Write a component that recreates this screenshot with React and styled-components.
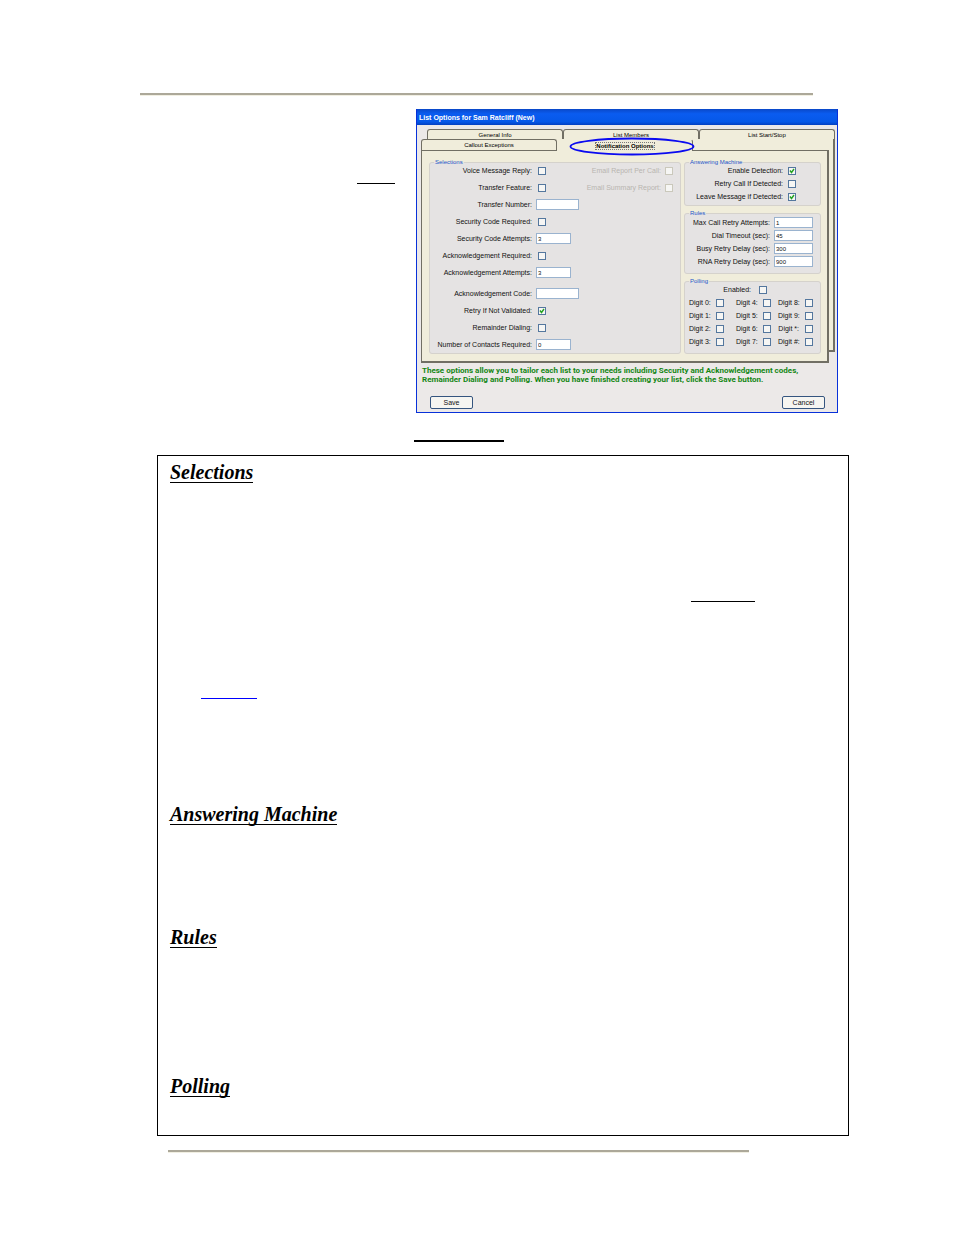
import React from "react";
import styled, { createGlobalStyle } from "styled-components";

const GlobalStyle = createGlobalStyle`
  * {
    box-sizing: border-box;
  }

  body {
    margin: 0;
    background: #fff;
    color: #000;
    font-family: "Liberation Sans", Arial, sans-serif;
  }
`;

const Page = styled.main`
  padding: 93px 105px 80px 140px;
`;

const Rule = styled.hr`
  height: 3px;
  margin: ${(p) => (p.$footer ? "14px 100px 0 28px" : "0 36px 0 0")};
  border: none;
  border-top: 2px solid #aca899;
  background: #f1efe2;
`;

const Intro = styled.section`
  display: flex;
  justify-content: space-between;
  margin-top: 13px;
  padding-right: 11px;
`;

const IntroText = styled.div`
  flex: 1;
  padding: 74px 21px 0 0;
`;

const BlankLink = styled.a`
  display: block;
  width: ${(p) => p.$width}px;
  height: ${(p) => p.$thick || 1}px;
  margin: ${(p) => p.$margin || "0"};
  background: ${(p) => p.$color || "#000"};
`;

const FigureLine = styled.div`
  padding: 27px 0 13px 274px;
`;

/* Dialog window */

const Dialog = styled.form`
  width: 422px;
  border: 1px solid #0831d9;
  border-width: 0 1px 1px 1px;
  background: #ece9e8;
  font-size: 7px;
  line-height: 10px;
`;

const TitleBar = styled.h2`
  height: 16px;
  margin: 0;
  padding: 0 2px;
  background: linear-gradient(#0a48c8, #0a5cf0 30%, #0558e8 80%, #0340c0);
  color: #fff;
  font-size: 7px;
  line-height: 17px;
  font-weight: bold;
`;

const DialogBody = styled.div`
  padding: 4px 2px 3px 4px;
`;

const Sheets = styled.div`
  display: grid;
`;

const Sheet = styled.div`
  grid-area: 1 / 1;
  display: flex;
  flex-direction: column;
  margin: ${(p) => (p.$back ? "0 0 11px 6px" : "10px 6px 0 0")};
`;

const TabRow = styled.div`
  display: flex;
  height: ${(p) => (p.$back ? 10 : 11)}px;
`;

const Tab = styled.button`
  flex: 0 0 calc(100% / 3);
  height: 100%;
  padding: 0;
  border: 1px solid #716f64;
  border-bottom: none;
  border-radius: 3px 3px 0 0;
  background: #f0eddb;
  color: #000;
  font-family: inherit;
  font-size: 6px;
  line-height: 10px;
`;

const ActiveTab = styled(Tab)`
  position: relative;
  height: 12px;
  border-color: transparent #716f64 transparent transparent;
  font-weight: bold;
`;

const FocusText = styled.span`
  outline: 1px dotted #777;
`;

/* Ring lies over the active tab */
const Ring = styled.svg`
  position: absolute;
  top: -2px;
  left: 12px;
  overflow: visible;
`;

const SheetBody = styled.div`
  flex: 1;
  display: flex;
  gap: 3px;
  padding: 7px 6px 7px 7px;
  border: solid #716f64;
  border-width: ${(p) => (p.$back ? "0 2px 2px 1px" : "1px 2px 2px 1px")};
  background: #f0eddb;
`;

const SideGroups = styled.div`
  flex: 0 0 137px;
  display: flex;
  flex-direction: column;
  gap: 3px;
`;

const Group = styled.fieldset`
  flex: ${(p) => p.$flex || "none"};
  min-width: 0;
  margin: 0;
  padding: 0 4px ${(p) => p.$bottom || 0}px;
  border: 1px solid #d5d2cc;
  border-radius: 3px;
  background: #e5e3e3;

  legend {
    margin-bottom: ${(p) => p.$pull || -2}px;
    padding: 0 1px;
    color: #1f55c8;
    font-size: 6px;
    line-height: 8px;
  }
`;

const Columns = styled.div`
  display: flex;
`;

const Field = styled.label`
  display: grid;
  grid-template-columns: ${(p) => p.$label}px 1fr;
  column-gap: 4px;
  align-items: center;
  height: ${(p) => p.$height || 17}px;
  margin-top: ${(p) => p.$gap || 0}px;
  color: ${(p) => (p.$disabled ? "#b8b5b0" : "#111")};
  white-space: nowrap;

  & > span {
    text-align: right;
  }
`;

const Check = styled.input`
  appearance: none;
  width: 8px;
  height: 8px;
  margin: 0 0 0 ${(p) => p.$indent || 0}px;
  border: 1px solid #54779e;
  background: #f6f6f4;

  &:checked {
    background: #f6f6f4
      url("data:image/svg+xml,%3Csvg xmlns='http://www.w3.org/2000/svg' viewBox='0 0 6 6'%3E%3Cpath d='M1 2.5l1.5 2L5 1' fill='none' stroke='%2321a121' stroke-width='1.4'/%3E%3C/svg%3E");
  }

  &:disabled {
    border-color: #cac8bb;
  }
`;

const TextBox = styled.input`
  width: ${(p) => p.$width}px;
  height: 11px;
  padding: 0 1px;
  border: 1px solid #9ab3cf;
  border-radius: 0;
  background: #fff;
  color: #111;
  font-family: inherit;
  font-size: 6px;
  line-height: 9px;
`;

const DigitGrid = styled.div`
  display: grid;
  grid-template-columns: 47px 42px 1fr;
`;

const Help = styled.p`
  margin: 3px 0 12px 1px;
  color: #138613;
  font-family: Roboto, "Liberation Sans", sans-serif;
  font-size: 8px;
  line-height: 9px;
  font-weight: bold;
  white-space: nowrap;
`;

const Buttons = styled.div`
  display: flex;
  justify-content: space-between;
  padding: 0 10px 0 9px;
`;

const PushButton = styled.button`
  width: 43px;
  height: 13px;
  padding: 0;
  border: 1px solid #35557f;
  border-radius: 2px;
  background: #f6f5f1;
  color: #111;
  font-family: inherit;
  font-size: 7px;
  line-height: 10px;
`;

/* Topics */

const Topics = styled.section`
  margin-left: 17px;
  padding: 6px 12px 0;
  border: 1px solid #000;
`;

const Topic = styled.section`
  min-height: ${(p) => p.$height}px;
`;

const TopicTitle = styled.h2`
  width: fit-content;
  margin: 0;
  border-bottom: 1px solid #000;
  font-family: "Palatino Linotype", Palatino, "Liberation Serif", serif;
  font-size: 20px;
  line-height: 20px;
  font-style: italic;
  font-weight: bold;
`;

const selections = [
  { label: "Voice Message Reply:", check: true },
  { label: "Transfer Feature:", check: true },
  { label: "Transfer Number:", value: "", width: 43 },
  { label: "Security Code Required:", check: true },
  { label: "Security Code Attempts:", value: "3", width: 35 },
  { label: "Acknowledgement Required:", check: true },
  { label: "Acknowledgement Attempts:", value: "3", width: 35 },
  { label: "Acknowledgement Code:", value: "", width: 43, gap: 4 },
  { label: "Retry If Not Validated:", check: true, checked: true },
  { label: "Remainder Dialing:", check: true },
  { label: "Number of Contacts Required:", value: "0", width: 35 },
];

const detection = [
  { label: "Enable Detection:", checked: true },
  { label: "Retry Call If Detected:" },
  { label: "Leave Message if Detected:", checked: true },
];

const rules = [
  { label: "Max Call Retry Attempts:", value: "1" },
  { label: "Dial Timeout (sec):", value: "45" },
  { label: "Busy Retry Delay (sec):", value: "300" },
  { label: "RNA Retry Delay (sec):", value: "900" },
];

const digits = ["0", "4", "8", "1", "5", "9", "2", "6", "*", "3", "7", "#"];

function ListOptions() {
  return (
    <Dialog onSubmit={(e) => e.preventDefault()}>
      <TitleBar>List Options for Sam Ratcliff (New)</TitleBar>
      <DialogBody>
        <Sheets>
          <Sheet $back>
            <TabRow $back>
              <Tab type="button">General Info</Tab>
              <Tab type="button">List Members</Tab>
              <Tab type="button">List Start/Stop</Tab>
            </TabRow>
            <SheetBody $back />
          </Sheet>

          <Sheet>
            <TabRow>
              <Tab type="button">Callout Exceptions</Tab>
              <ActiveTab type="button">
                <FocusText>Notification Options</FocusText>
                <Ring width="124" height="17" viewBox="0 0 124 17" aria-hidden="true">
                  <ellipse cx="62" cy="8.5" rx="61.5" ry="8" fill="none" stroke="#0a0af0" strokeWidth="1.8" />
                </Ring>
              </ActiveTab>
            </TabRow>
            <SheetBody>
              <Group $flex="1" $pull={-4}>
                <legend>Selections</legend>
                <Columns>
                  <div>
                    {selections.map((s) => (
                      <Field key={s.label} $label={98} $gap={s.gap}>
                        <span>{s.label}</span>
                        {s.check ? (
                          <Check type="checkbox" $indent={2} defaultChecked={s.checked} />
                        ) : (
                          <TextBox type="text" $width={s.width} defaultValue={s.value} />
                        )}
                      </Field>
                    ))}
                  </div>
                  <div>
                    <Field $label={82} $disabled>
                      <span>Email Report Per Call:</span>
                      <Check type="checkbox" disabled />
                    </Field>
                    <Field $label={82} $disabled>
                      <span>Email Summary Report:</span>
                      <Check type="checkbox" disabled />
                    </Field>
                  </div>
                </Columns>
              </Group>

              <SideGroups>
                <Group $bottom={2}>
                  <legend>Answering Machine</legend>
                  {detection.map((d) => (
                    <Field key={d.label} $label={94} $height={13}>
                      <span>{d.label}</span>
                      <Check type="checkbox" $indent={1} defaultChecked={d.checked} />
                    </Field>
                  ))}
                </Group>
                <Group $pull={-1} $bottom={5}>
                  <legend>Rules</legend>
                  {rules.map((r) => (
                    <Field key={r.label} $label={81} $height={13}>
                      <span>{r.label}</span>
                      <TextBox type="text" $width={39} defaultValue={r.value} />
                    </Field>
                  ))}
                </Group>
                <Group $flex="1">
                  <legend>Polling</legend>
                  <Field $label={62} $height={13}>
                    <span>Enabled:</span>
                    <Check type="checkbox" $indent={4} />
                  </Field>
                  <DigitGrid>
                    {digits.map((d) => (
                      <Field key={d} $label={21} $height={13}>
                        <span>Digit {d}:</span>
                        <Check type="checkbox" $indent={2} />
                      </Field>
                    ))}
                  </DigitGrid>
                </Group>
              </SideGroups>
            </SheetBody>
          </Sheet>
        </Sheets>
        <Help>
          These options allow you to tailor each list to your needs including Security and Acknowledgement codes,
          <br />
          Remainder Dialing and Polling. When you have finished creating your list, click the Save button.
        </Help>
        <Buttons>
          <PushButton type="submit">Save</PushButton>
          <PushButton type="button">Cancel</PushButton>
        </Buttons>
      </DialogBody>
    </Dialog>
  );
}

function App() {
  return (
    <Page>
      <GlobalStyle />
      <Rule />
      <Intro>
        <IntroText>
          <BlankLink href="#list" aria-label="List" $width={38} $margin="0 0 0 auto" />
        </IntroText>
        <ListOptions />
      </Intro>
      <FigureLine>
        <BlankLink href="#figure" aria-label="Figure" $width={90} $thick={2} />
      </FigureLine>

      <Topics>
        <Topic $height={342}>
          <TopicTitle>Selections</TopicTitle>
          <BlankLink href="#transfer" aria-label="Transfer" $width={64} $margin="118px 81px 0 auto" />
          <BlankLink href="#codes" aria-label="Codes" $width={56} $margin="96px 0 0 31px" $color="#00f" />
        </Topic>
        <Topic $height={123}>
          <TopicTitle>Answering Machine</TopicTitle>
        </Topic>
        <Topic $height={149}>
          <TopicTitle>Rules</TopicTitle>
        </Topic>
        <Topic $height={59}>
          <TopicTitle>Polling</TopicTitle>
        </Topic>
      </Topics>
      <Rule $footer />
    </Page>
  );
}

export default App;
